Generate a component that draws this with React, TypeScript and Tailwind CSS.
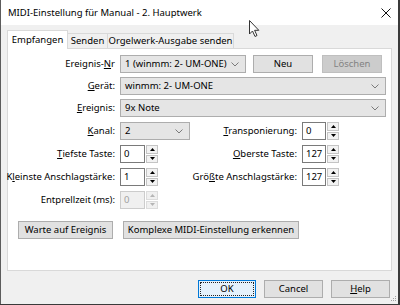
import React from "react";

function Chevron({ color = "#7a7a7a" }: { color?: string }) {
  return (
    <svg width="8" height="5" viewBox="0 0 8 5" className="shrink-0">
      <path d="M0.5 0.5 L4 4 L7.5 0.5" fill="none" stroke={color} strokeWidth="1" />
    </svg>
  );
}

function Select({ value, w }: { value: string; w: string }) {
  return (
    <div
      className={`${w} flex h-[18px] items-center justify-between border border-[#adadad] bg-[#e5e5e5] pl-[4px] pr-[6px]`}
    >
      <span className="whitespace-nowrap">{value}</span>
      <Chevron />
    </div>
  );
}

function Button({
  children,
  w,
  disabled,
  focused,
}: {
  children: React.ReactNode;
  w: string;
  disabled?: boolean;
  focused?: boolean;
}) {
  if (focused) {
    return (
      <div className={`${w} h-[18px] border border-[#0078d7] bg-[#e5f1fb] p-[1px]`}>
        <div className="flex h-full items-center justify-center border border-dotted border-[#222]">
          {children}
        </div>
      </div>
    );
  }
  return (
    <div
      className={`${w} flex h-[18px] items-center justify-center whitespace-nowrap border ${
        disabled
          ? "border-[#bfbfbf] bg-[#cccccc] text-[#838383]"
          : "border-[#adadad] bg-[#e1e1e1]"
      }`}
    >
      {children}
    </div>
  );
}

function Spin({ value, w, disabled }: { value: string; w: string; disabled?: boolean }) {
  const arrow = disabled ? "#b5b5b5" : "#000";
  const btn = disabled ? "border-[#dcdcdc] bg-[#f0f0f0]" : "border-[#c4c4c4] bg-[#f2f2f2]";
  return (
    <div className={`${w} flex h-[18px]`}>
      <div
        className={`flex flex-1 items-center border pl-[3px] ${
          disabled ? "border-[#cccccc] bg-[#f0f0f0] text-[#a0a0a0]" : "border-[#7a7a7a] bg-white"
        }`}
      >
        {value}
      </div>
      <div className="ml-[1px] flex w-[12px] flex-col gap-[1px]">
        <div className={`flex flex-1 items-center justify-center border ${btn}`}>
          <svg width="5" height="3" viewBox="0 0 5 3">
            <path d="M0 3 L2.5 0 L5 3 Z" fill={arrow} />
          </svg>
        </div>
        <div className={`flex flex-1 items-center justify-center border ${btn}`}>
          <svg width="5" height="3" viewBox="0 0 5 3">
            <path d="M0 0 L5 0 L2.5 3 Z" fill={arrow} />
          </svg>
        </div>
      </div>
    </div>
  );
}

function Label({ children, w }: { children: React.ReactNode; w: string }) {
  return (
    <div className={`${w} flex shrink-0 justify-end whitespace-nowrap pr-[5px]`}>
      <span>{children}</span>
    </div>
  );
}

export default function App() {
  return (
    <div className="relative h-[305px] w-[400px] overflow-hidden bg-[#3a3a3a] font-['Segoe_UI','Noto_Sans',sans-serif] text-[9.5px] leading-[12px] text-black">
      <div className="flex h-[304px] w-[398px] flex-col border-l border-[#5c5c5c] bg-[#f0f0f0]">
        {/* title bar */}
        <div className="flex h-[25px] shrink-0 items-center justify-between bg-white pl-[7px] pr-[6px]">
          <span>MIDI-Einstellung für Manual - 2. Hauptwerk</span>
          <svg width="10" height="10" viewBox="0 0 10 10" className="mr-[1px]">
            <path d="M0.5 0.5 L9.5 9.5 M9.5 0.5 L0.5 9.5" stroke="#111" strokeWidth="1" />
          </svg>
        </div>

        <div className="flex flex-1 flex-col pl-[6px] pr-[6px] pt-[6px]">
          {/* tabs */}
          <div className="relative z-10 flex h-[17px] items-end">
            <div className="-mb-[1px] flex h-[19px] w-[61px] items-center justify-center border-x border-t border-[#d9d9d9] bg-white pb-[1px]">
              Empfangen
            </div>
            <div className="flex h-[15px] w-[40px] items-center justify-center border-r border-t border-[#d9d9d9]">
              Senden
            </div>
            <div className="flex h-[15px] w-[126px] items-center justify-center whitespace-nowrap border-r border-t border-[#d9d9d9]">
              Orgelwerk-Ausgabe senden
            </div>
          </div>

          {/* panel */}
          <div className="flex h-[223px] w-[385px] flex-col border border-[#d9d9d9] bg-white pt-[6px]">
            <div className="flex h-[18px] items-center">
              <Label w="w-[112px]">
                Ereignis-<span className="underline">N</span>r
              </Label>
              <Select w="w-[126px]" value="1 (winmm: 2- UM-ONE)" />
              <div className="ml-[7px]">
                <Button w="w-[60px]">Neu</Button>
              </div>
              <div className="ml-[9px]">
                <Button w="w-[60px]" disabled>
                  Löschen
                </Button>
              </div>
            </div>

            <div className="mt-[4px] flex h-[18px] items-center">
              <Label w="w-[112px]">
                <span className="underline">G</span>erät:
              </Label>
              <Select w="w-[266px]" value="winmm: 2- UM-ONE" />
            </div>

            <div className="mt-[4px] flex h-[18px] items-center">
              <Label w="w-[112px]">
                <span className="underline">E</span>reignis:
              </Label>
              <Select w="w-[266px]" value="9x Note" />
            </div>

            <div className="mt-[5px] flex h-[18px] items-center">
              <div className="flex w-[182px] items-center">
                <Label w="w-[112px]">
                  <span className="underline">K</span>anal:
                </Label>
                <Select w="w-[70px]" value="2" />
              </div>
              <Label w="w-[112px]">
                <span className="underline">T</span>ransponierung:
              </Label>
              <Spin w="w-[37px]" value="0" />
            </div>

            <div className="mt-[5px] flex h-[18px] items-center">
              <div className="flex w-[182px] items-center">
                <Label w="w-[112px]">
                  <span className="underline">T</span>iefste Taste:
                </Label>
                <Spin w="w-[38px]" value="0" />
              </div>
              <Label w="w-[112px]">
                <span className="underline">O</span>berste Taste:
              </Label>
              <Spin w="w-[37px]" value="127" />
            </div>

            <div className="mt-[5px] flex h-[18px] items-center">
              <div className="flex w-[182px] items-center">
                <Label w="w-[112px]">
                  K<span className="underline">l</span>einste Anschlagstärke:
                </Label>
                <Spin w="w-[38px]" value="1" />
              </div>
              <Label w="w-[112px]">
                Grö<span className="underline">ß</span>te Anschlagstärke:
              </Label>
              <Spin w="w-[37px]" value="127" />
            </div>

            <div className="mt-[5px] flex h-[18px] items-center">
              <Label w="w-[112px]">Entprellzeit (ms):</Label>
              <Spin w="w-[38px]" value="0" disabled />
            </div>

            <div className="ml-[10px] mt-[12px] flex items-center gap-[10px]">
              <Button w="w-[95px]">Warte auf Ereignis</Button>
              <Button w="w-[176px]">Komplexe MIDI-Einstellung erkennen</Button>
            </div>
          </div>

          {/* dialog buttons */}
          <div className="mt-[9px] flex justify-end gap-[8px] pr-[2px]">
            <Button w="w-[58px]" focused>
              OK
            </Button>
            <Button w="w-[59px]">Cancel</Button>
            <Button w="w-[59px]">
              <span className="underline">H</span>elp
            </Button>
          </div>
        </div>
      </div>

      {/* resize grip */}
      <svg width="6" height="6" viewBox="0 0 6 6" className="absolute left-[391px] top-[296px]">
        <rect x="4" y="0" width="1" height="1" fill="#a0a0a0" />
        <rect x="2" y="2" width="1" height="1" fill="#a0a0a0" />
        <rect x="4" y="2" width="1" height="1" fill="#a0a0a0" />
        <rect x="0" y="4" width="1" height="1" fill="#a0a0a0" />
        <rect x="2" y="4" width="1" height="1" fill="#a0a0a0" />
        <rect x="4" y="4" width="1" height="1" fill="#a0a0a0" />
      </svg>

      {/* mouse cursor */}
      <svg width="12" height="18" viewBox="0 0 12 18" className="absolute left-[249px] top-[20px]">
        <path d="M0.5 0.5 L0.5 14 L3.5 11 L6 16.5 L8 15.5 L5.6 10.3 L9.8 10.3 Z" fill="#fff" stroke="#333" strokeWidth="1" />
      </svg>
    </div>
  );
}
